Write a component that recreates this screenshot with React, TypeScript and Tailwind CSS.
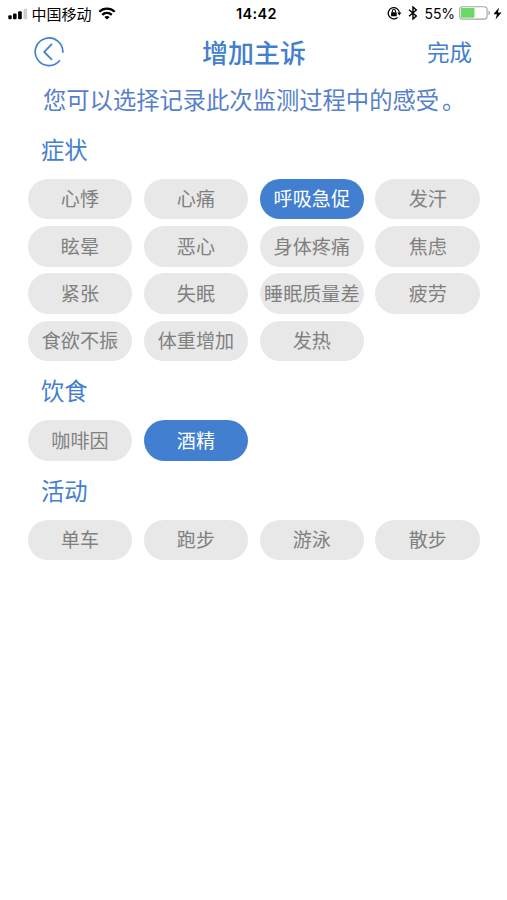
type Section = { title: string; items: string[]; selected: string[] };

const sections: Section[] = [
  {
    title: '症状',
    items: [
      '心悸', '心痛', '呼吸急促', '发汗',
      '眩晕', '恶心', '身体疼痛', '焦虑',
      '紧张', '失眠', '睡眠质量差', '疲劳',
      '食欲不振', '体重增加', '发热',
    ],
    selected: ['呼吸急促'],
  },
  { title: '饮食', items: ['咖啡因', '酒精'], selected: ['酒精'] },
  { title: '活动', items: ['单车', '跑步', '游泳', '散步'], selected: [] },
];

function StatusBar() {
  return (
    <div className="grid h-7 grid-cols-[1fr_auto_1fr] items-center pl-2 pr-[5px] text-black">
      <div className="flex items-center">
        <svg width="20" height="12" viewBox="0 0 20 12">
          <rect x="0.3" y="7.3" width="3.4" height="3.9" rx="1" />
          <rect x="5" y="5.5" width="3.6" height="5.7" rx="1" />
          <rect x="10.1" y="3.2" width="3.7" height="8" rx="1" />
          <rect x="15.5" y="0.8" width="3.6" height="10.4" rx="1" fill="#cfcfcf" />
        </svg>
        <span className="ml-[3.5px] text-[15px] leading-[26px]">中国移动</span>
        <svg className="ml-[6px] -mt-0.5" width="18" height="13" viewBox="0 0 18 13">
          <g fill="none" stroke="black" strokeWidth="2.3">
            <path d="M1.3 4.8C5.6 0.6 12.4 0.6 16.7 4.8" />
            <path d="M4.2 7.8C6.9 5.2 11.1 5.2 13.8 7.8" />
          </g>
          <path d="M9 12.6 6.3 9.9C7.8 8.6 10.2 8.6 11.7 9.9Z" />
        </svg>
      </div>
      <span className="pl-[3px] font-[Inter] text-[14.5px] font-semibold tracking-[0.35px]">14:42</span>
      <div className="-mt-0.5 flex items-center justify-end">
        <svg width="15" height="14" viewBox="0 0 15 14">
          <path d="M10.5 11.5A5.6 5.6 0 1 1 12.4 6.5" fill="none" stroke="black" strokeWidth="1.3" />
          <path d="M10.2 6.6H14.4L12.3 9.4Z" />
          <rect x="4.1" y="6.3" width="5.6" height="4" rx="0.6" />
          <path d="M5.3 6.6V5.1a1.6 1.6 0 0 1 3.2 0V6.6" fill="none" stroke="black" strokeWidth="1.1" />
        </svg>
        <svg className="ml-[6px]" width="10" height="14" viewBox="0 0 10 14">
          <path d="M1 3.8 8.3 10 5 13V1L8.3 4 1 10.2" fill="none" stroke="black" strokeWidth="1.4" />
        </svg>
        <span className="ml-[7px] mt-px font-[Inter] text-[14px] tracking-[-0.1px]">55%</span>
        <svg className="ml-[4px]" width="32" height="14" viewBox="0 0 32 14">
          <rect x="0.7" y="0.7" width="27.4" height="12.4" rx="2.8" fill="white" stroke="#a5a5a5" strokeWidth="1.1" />
          <rect x="2" y="2" width="13.5" height="9.8" rx="1.2" fill="#6cd966" />
          <path d="M29.5 4.5C31.5 5.2 31.5 8.6 29.5 9.3Z" fill="#a5a5a5" />
        </svg>
        <svg className="ml-[2px]" width="9" height="13" viewBox="0 0 8 12">
          <path d="M5.4 0.4 0.3 6.6H3.5L2.2 11.6 7.7 5H4.4Z" />
        </svg>
      </div>
    </div>
  );
}

function Header() {
  return (
    <header className="grid h-[47px] grid-cols-[1fr_auto_1fr] items-center pl-[34px] pr-[35px] text-[#437fce]">
      <button aria-label="返回" className="w-8">
        <svg width="30" height="30" viewBox="0 0 30 30" fill="none" stroke="currentColor">
          <path d="M28.8 15.7A13.8 13.8 0 1 0 25.9 23.3" strokeWidth="1.7" />
          <path d="M18 6.9 10.2 14.9 18 22.9" strokeWidth="1.8" />
        </svg>
      </button>
      <h1 className="pl-0.5 text-[26px] font-medium leading-none">增加主诉</h1>
      <button className="justify-self-end text-[22.5px] leading-none">完成</button>
    </header>
  );
}

function Pill({ label, active }: { label: string; active: boolean }) {
  return (
    <button
      className={`flex h-[40.4px] items-center justify-center whitespace-nowrap rounded-full pb-[0.4px] text-[19.1px] leading-none ${
        active ? 'bg-[#427fd0] text-white' : 'bg-[#e8e8e8] text-[#808080]'
      }`}
    >
      {label}
    </button>
  );
}

export default function App() {
  return (
    <div className="min-h-[900px] w-full bg-white font-['Noto_Sans_CJK_SC',sans-serif]">
      <StatusBar />
      <Header />
      <p className="ml-[43px] h-12 whitespace-nowrap text-[23.3px] leading-[48px] text-[#5680cb]">
        您可以选择记录此次监测过程中的感受<span className="ml-[3px]">。</span>
      </p>
      <main className="pl-[27.7px] pr-[27px]">
        {sections.map((section) => (
          <section key={section.title}>
            <h2 className="ml-[13.3px] h-[59.5px] pt-[7px] text-[23.3px] leading-[38px] text-[#437fce]">
              {section.title}
            </h2>
            <div className="-mt-[3.5px] grid grid-cols-4 gap-x-[11.4px] gap-y-[6.8px] pb-[3.3px]">
              {section.items.map((item) => (
                <Pill key={item} label={item} active={section.selected.includes(item)} />
              ))}
            </div>
          </section>
        ))}
      </main>
    </div>
  );
}
